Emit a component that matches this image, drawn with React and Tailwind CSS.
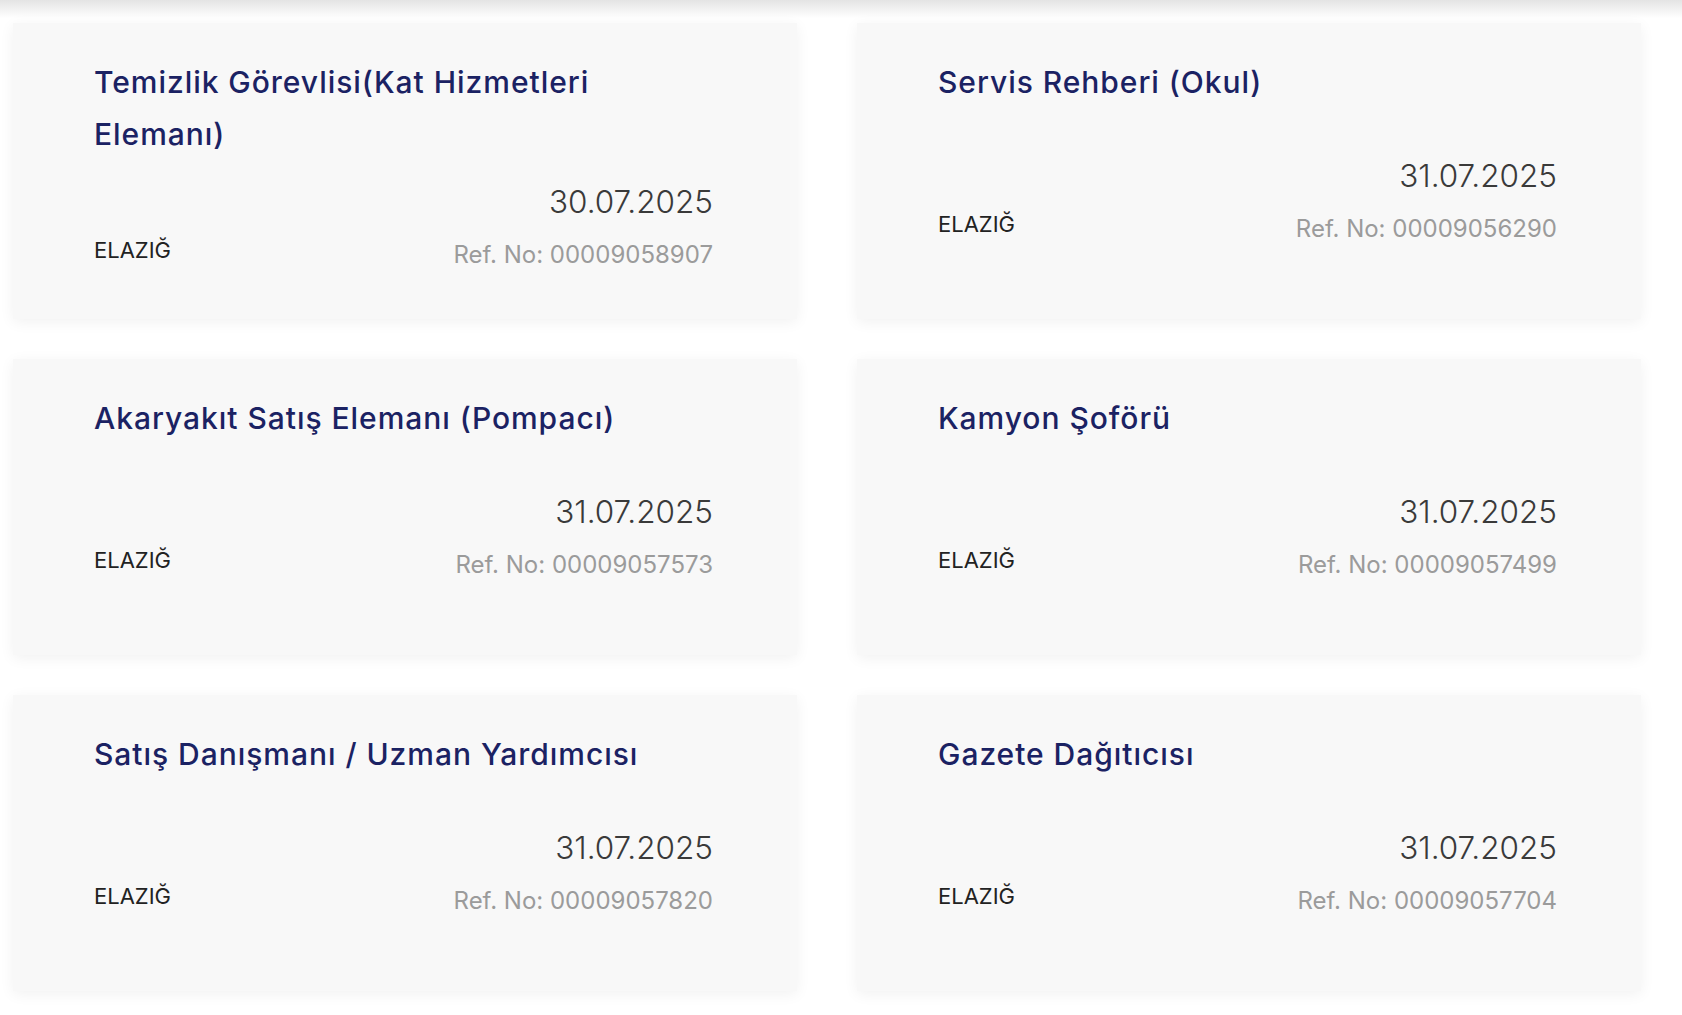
import React from "react";

const jobs = [
  { title: "Temizlik Görevlisi(Kat Hizmetleri Elemanı)", date: "30.07.2025", ref: "00009058907" },
  { title: "Servis Rehberi (Okul)", date: "31.07.2025", ref: "00009056290" },
  { title: "Akaryakıt Satış Elemanı (Pompacı)", date: "31.07.2025", ref: "00009057573" },
  { title: "Kamyon Şoförü", date: "31.07.2025", ref: "00009057499" },
  { title: "Satış Danışmanı / Uzman Yardımcısı", date: "31.07.2025", ref: "00009057820" },
  { title: "Gazete Dağıtıcısı", date: "31.07.2025", ref: "00009057704" },
];

function JobCard({ job }) {
  return (
    <div className="flex h-[296px] flex-col bg-[#f8f8f8] pl-[81px] pr-[84px] pt-[33px] pb-[29px] shadow-[0_3px_14px_rgba(0,0,0,0.06)]">
      <h3 className="max-w-[590px] text-[30px] font-medium leading-[52px] tracking-[0.032em] text-[#1b2263]">
        {job.title}
      </h3>
      <div className="flex flex-1 items-center">
        <div className="flex w-full items-end justify-between">
          <span className="mb-[5px] text-[22px] leading-[28px] text-[#222222]">ELAZIĞ</span>
          <div className="flex flex-col items-end">
            <span className="text-[31.5px] font-light leading-[40px] text-[#3a3a3a]">{job.date}</span>
            <span className="mt-[19px] text-[24px] leading-[28px] text-[#9b9b9b]">
              Ref. No: {job.ref}
            </span>
          </div>
        </div>
      </div>
    </div>
  );
}

export default function App() {
  return (
    <div className="min-h-[1015px] w-[1682px] bg-white font-['Inter',sans-serif]">
      <div className="h-[18px] bg-gradient-to-b from-[#e4e4e4] to-white" />
      <div className="grid grid-cols-[784px_784px] gap-x-[60px] gap-y-[40px] pl-[13px] pt-[5px]">
        {jobs.map((job) => (
          <JobCard key={job.ref} job={job} />
        ))}
      </div>
    </div>
  );
}
